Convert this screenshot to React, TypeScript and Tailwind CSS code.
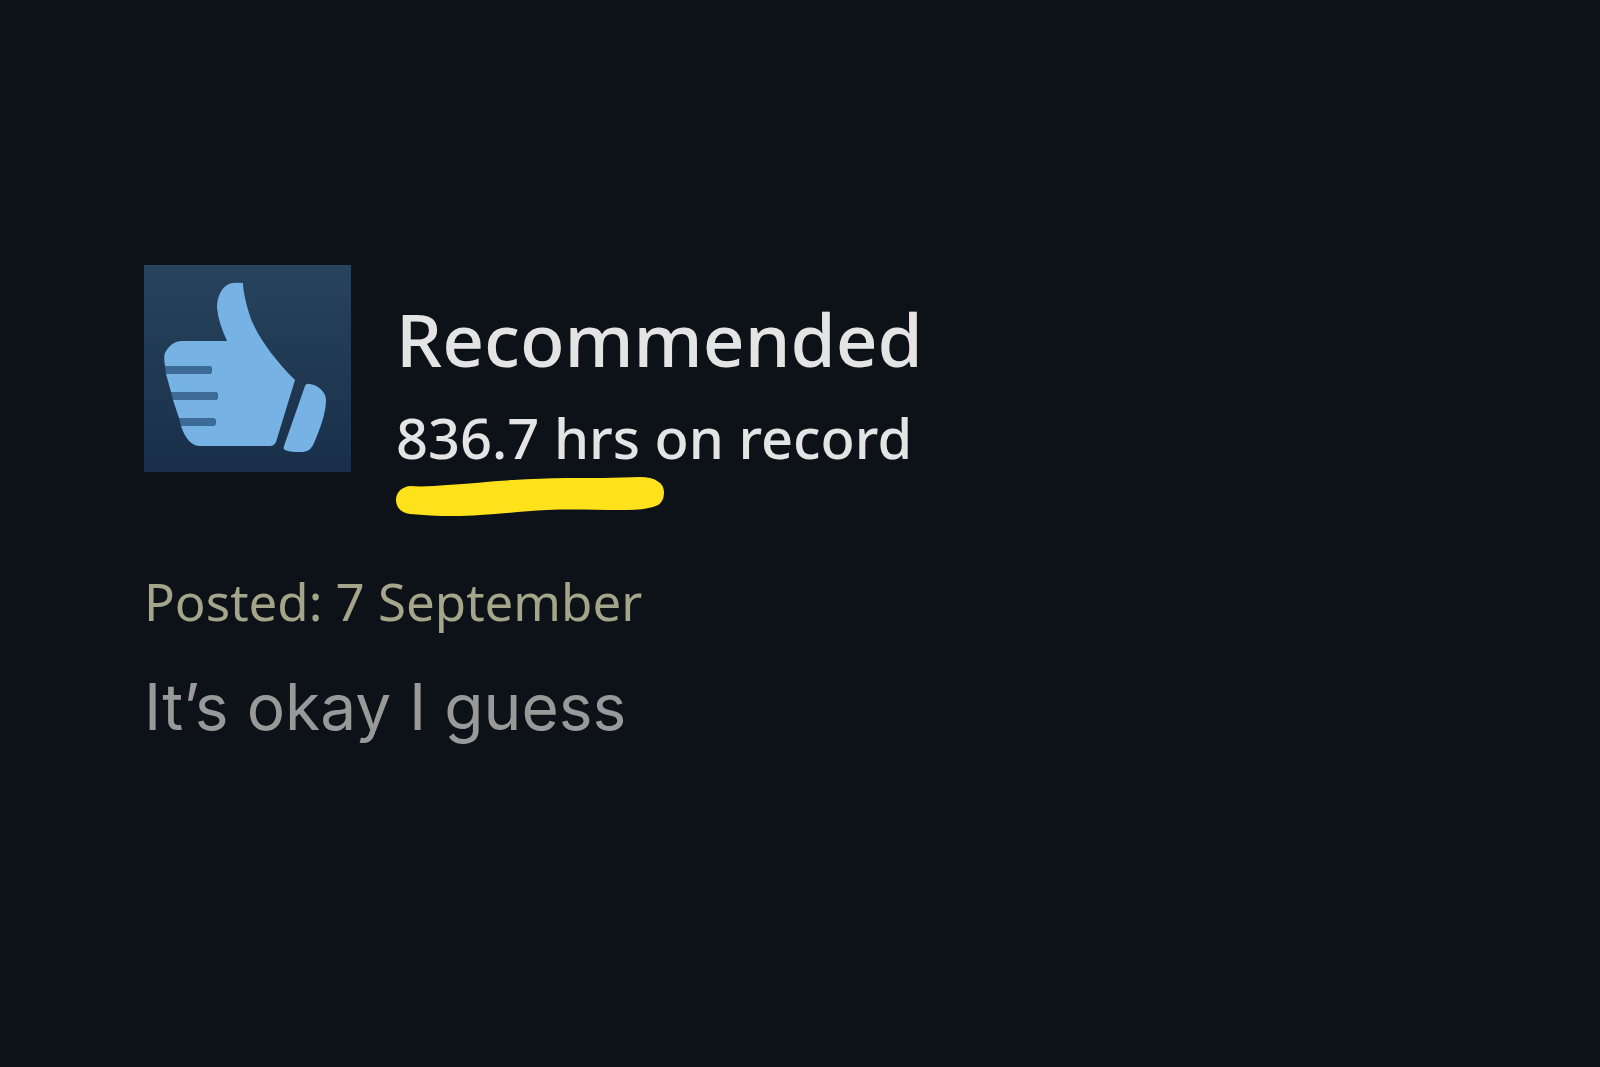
function ThumbUp() {
  return (
    <svg viewBox="0 0 207 207" className="size-full" aria-hidden="true">
      <g fill="#76b3e4">
        <path d="M99 18C99 24 101 35 105 48C111 68 128 92 151 115L132 177Q130 181 126 181H56C47 181 41 173 37 161H68Q72 161 72 157T68 153H35L29 135H71Q74 135 74 131T71 127H27L22 109H65Q68 109 68 105T65 101H21C20 96 20 90 21 88C25 80 31 76 38 76H83C78 65 74 54 73 43C73 31 78 22 85 19Q89 17 99 18Z" />
        <path d="M161 121Q162 118 166 119C174 120 182 127 182 135C182 148 176 164 170 178C167 185 163 187 157 187C151 187 146 187 141 185Q139 184 140 181Z" />
      </g>
      <g fill="#3c6c95">
        <path d="M21 101H65Q68 101 68 105T65 109H22Z" />
        <path d="M27 127H71Q74 127 74 131T71 135H29Z" />
        <path d="M35 153H68Q72 153 72 157T68 161H37Z" />
      </g>
    </svg>
  );
}

function MarkerStroke() {
  return (
    <svg width="268" height="40" viewBox="0 0 268 40" className="mt-1" aria-hidden="true">
      <path
        fill="#ffe11c"
        d="M14 9C26 10 39 9 51 8C73 7 95 4 117 3C135 2 153 1 171 1C195 1 220 1 244 0C259 0 268 6 268 15C268 23 265 28 257 30C246 33 235 33 224 33C200 33 175 32 151 33C129 34 106 37 84 38C61 40 35 39 14 37C5 36 0 30 0 23C0 16 5 10 14 9Z"
      />
    </svg>
  );
}

export default function App() {
  return (
    <main className="min-h-screen bg-[#0d1219] px-36 pt-[265px] pb-16 font-['Noto_Sans',sans-serif]">
      <article>
        <header className="flex items-start gap-[45px]">
          <div className="size-[207px] shrink-0 bg-linear-to-b from-[#28435d] to-[#192f49]">
            <ThumbUp />
          </div>
          <div className="pt-8 text-[#e4e4e4]">
            <h1 className="text-[73px] leading-[84px] font-medium">Recommended</h1>
            <p className="mt-5 text-[56px] leading-[72px] font-medium">836.7 hrs on record</p>
            <MarkerStroke />
          </div>
        </header>
        <p className="mt-[52px] text-[51px] leading-[64px] text-[#a5a58a]">Posted: 7 September</p>
        <p className="mt-[38px] font-['Inter',sans-serif] text-[64px] leading-[72px] text-[#999999]">
          It’s okay I guess
        </p>
      </article>
    </main>
  );
}
